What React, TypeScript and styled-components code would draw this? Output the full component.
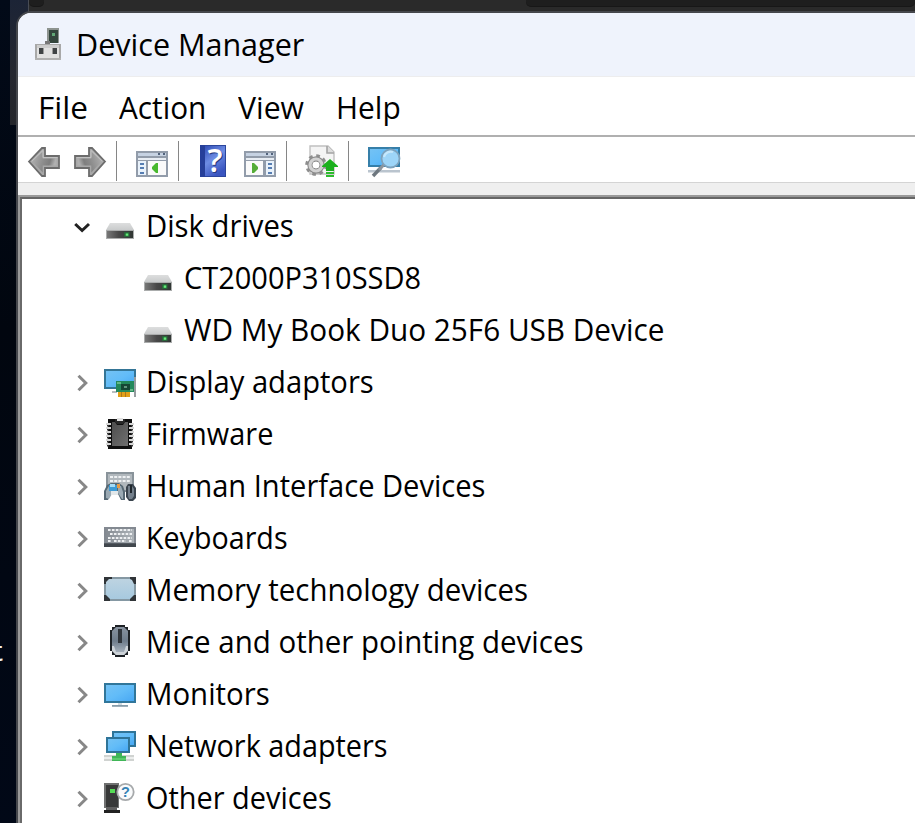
import React from 'react';
import styled, { createGlobalStyle } from 'styled-components';

const GlobalStyle = createGlobalStyle`
  html, body { margin: 0; padding: 0; overflow: hidden; background: #020818; }
  * { box-sizing: border-box; }
`;

const Desktop = styled.main`
  position: relative;
  width: 915px;
  height: 823px;
  padding: 11px 0 0 16px;
  overflow: hidden;
  background: linear-gradient(180deg, #020a18 0%, #01060f 40%, #010817 100%);
  font-family: 'Open Sans', 'Noto Sans', sans-serif;
  color: #000;
`;

/* Windows that sit behind Device Manager */
const BackPanel = styled.div`
  position: absolute;
  left: 10px;
  top: 0;
  width: 19px;
  height: 125px;
  background: linear-gradient(180deg, #1c2436, #262830 60%, #24262b);
`;

const BackWindow = styled.div`
  position: absolute;
  left: 28px;
  top: 0;
  right: 0;
  height: 30px;
  background: #2a2a2a;
  border-left: 1px solid #484c54;
`;

const BackTab = styled.div<{ $left: number; $right?: number }>`
  position: absolute;
  top: 0;
  left: ${(p) => p.$left}px;
  width: ${(p) => (p.$right ? `${p.$right - p.$left}px` : 'auto')};
  right: ${(p) => (p.$right ? 'auto' : '0')};
  height: 7px;
  background: #1e1e1e;
  border-bottom: 1px solid #171717;
  border-radius: 0 0 5px 5px;
`;

const StrayText = styled.span`
  position: absolute;
  left: -11px;
  top: 638px;
  font: 27px/32px 'Liberation Mono', monospace;
  color: #f2f2f2;
`;

const Window = styled.section`
  position: relative;
  display: flex;
  flex-direction: column;
  width: 920px;
  height: 812px;
  border: 2px solid #45474c;
  border-bottom: 0;
  border-radius: 15px 0 0 0;
  background: #fff;
  overflow: hidden;
`;

const TitleBar = styled.header`
  display: flex;
  align-items: center;
  height: 64px;
  flex: none;
  padding: 0 0 1px 16px;
  gap: 9px;
  background: #eff3fc;
  border-bottom: 1px solid #ededee;
`;

const Label = styled.span<{ $fit: number; $shift?: number }>`
  display: block;
  font-size: 31px;
  line-height: 44px;
  white-space: nowrap;
  transform-origin: 0 50%;
  transform: scaleX(${(p) => p.$fit});
  margin-left: ${(p) => p.$shift ?? 0}px;
`;

const MenuBar = styled.nav`
  display: grid;
  grid-template-columns: 82px 119px 100px 90px;
  align-items: center;
  height: 58px;
  flex: none;
  padding: 2px 0 0 19px;
`;

const ToolBar = styled.div`
  display: flex;
  align-items: center;
  height: 48px;
  flex: none;
  border-top: 2px solid #b0b0b0;
  border-bottom: 1px solid #d4d4d4;
  padding: 2px 0 0 10px;
`;

const ToolButton = styled.span<{ $gap: number }>`
  display: flex;
  width: 32px;
  padding-top: 2px;
  margin-right: ${(p) => p.$gap}px;
`;

const Separator = styled.i<{ $gap: number }>`
  width: 1px;
  height: 40px;
  background: #868686;
  margin-right: ${(p) => p.$gap}px;
`;

const Gutter = styled.div`
  height: 12px;
  flex: none;
  background: #efefef;
`;

const TreeFrame = styled.div`
  flex: 1;
  border-top: 2px solid #9a9a9a;
  border-left: 2px solid #9a9a9a;
`;

const Tree = styled.ul`
  height: 100%;
  margin: 0;
  padding: 0;
  list-style: none;
  border-top: 2px solid #666;
  border-left: 2px solid #6a6a6a;
`;

const Row = styled.li<{ $child?: boolean }>`
  display: flex;
  align-items: center;
  height: 52px;
  padding-left: ${(p) => (p.$child ? 120 : 52)}px;
`;

const Twisty = styled.span`
  display: flex;
  width: 30px;
  padding-top: 4px;
`;

const IconSlot = styled.span`
  display: flex;
  width: 32px;
  margin-right: 10px;
`;

const Svg = styled.svg`
  display: block;
  flex: none;
  width: 32px;
  height: 32px;
  overflow: visible;
`;

type IconProps = { children: React.ReactNode };
const Icon = ({ children }: IconProps) => <Svg viewBox="0 0 32 32">{children}</Svg>;

const ScreenGradient = ({ id }: { id: string }) => (
  <linearGradient id={id} x1="0" y1="0" x2="1" y2="1">
    <stop offset="0" stopColor="#74c2f4" />
    <stop offset="0.5" stopColor="#62bcf8" />
    <stop offset="1" stopColor="#48a8f4" />
  </linearGradient>
);

const DeviceManagerIcon = () => (
  <Icon>
    <path d="M13 0h12v15H13z" fill="#8d938f" />
    <path d="M15 2h9v13h-9z" fill="#34463d" />
    <path d="M18 5h3v3h-3z" fill="#61a876" />
    <path d="M11 13h5v3h-5z" fill="#777" />
    <path d="M1 16h26v16H1z" fill="#a8a8a8" />
    <path d="M3 17h22v3H3z" fill="#cdcdcd" />
    <path d="M3 20h22v10H3z" fill="#e1e1e1" />
    <path d="M5 20h4v6H5zM19 20h4v6h-4z" fill="#3f4345" />
    <path d="M9 20h1v6H9zM18 20h1v6h-1z" fill="#999" />
    <path d="M1 30h26v2H1z" fill="#b0b0b0" />
  </Icon>
);

const ArrowIcon = ({ flip }: { flip?: boolean }) => (
  <Icon>
    <defs>
      <linearGradient id={flip ? 'arrR' : 'arrL'} x1="0" x2="1" y1="0" y2="0.3">
        <stop offset="0" stopColor="#b4b4b4" />
        <stop offset="0.55" stopColor="#8c8c8c" />
        <stop offset="0.8" stopColor="#7e7e7e" />
        <stop offset="1" stopColor="#b0b0b0" />
      </linearGradient>
    </defs>
    <g transform={flip ? 'translate(32 0) scale(-1 1)' : undefined}>
      <path d="M1 15.5 L14 2 H17 V10 H31 V22 H17 V30 H14 Z" fill="#a8a8a8" stroke="#6c6c6c" strokeWidth="1.8" />
      <path d="M4.5 15.5 L14.7 5.5 V12.5 H28.5 V19.5 H14.7 V26.5 Z" fill={`url(#${flip ? 'arrR' : 'arrL'})`} />
      <path d="M3.6 15.5 L15 4.4 V11.6 H29.5" fill="none" stroke="#c4c4c4" strokeWidth="1" />
    </g>
  </Icon>
);

const PanelIcon = ({ right }: { right?: boolean }) => (
  <Icon>
    <path d="M0 5h32v26H0z" fill="#929caa" />
    <path d="M2 7h28v3H2z" fill="#c6d2e2" />
    <path d="M22 7h2v2h-2zM27 7h2v2h-2z" fill="#52637c" />
    <path d="M2 12h28v2H2z" fill="#e8edf3" />
    {right ? (
      <>
        <path d="M2 15h17v14H2z" fill="#fafafa" />
        <path d="M22 15h8v14h-8z" fill="#e9f2fb" />
        <path d="M24 17h4v2h-4zM24 21h4v2h-4zM24 26h4v2h-4z" fill="#557db2" />
        <path d="M8 17h2l4 4v2l-4 4H8z" fill="#55ad38" />
      </>
    ) : (
      <>
        <path d="M2 15h8v14H2z" fill="#e9f2fb" />
        <path d="M12 15h18v14H12z" fill="#fafafa" />
        <path d="M4 17h4v2H4zM4 21h4v2H4zM4 26h4v2H4z" fill="#557db2" />
        <path d="M22 17h-2l-4 4v2l4 4h2z" fill="#48b92f" />
      </>
    )}
  </Icon>
);

const HelpIcon = () => (
  <Icon>
    <defs>
      <linearGradient id="helpG" x1="0" y1="0" x2="0.5" y2="1">
        <stop offset="0" stopColor="#3350b8" />
        <stop offset="0.5" stopColor="#6d8ce3" />
        <stop offset="1" stopColor="#3a55c0" />
      </linearGradient>
    </defs>
    <path d="M0 -1h26v32H0z" fill="#2c469c" />
    <path d="M5 0h20v30H5z" fill="url(#helpG)" />
    <path d="M0 -1h5v32H0z" fill="#263f99" />
    <text x="16" y="27" textAnchor="middle" fontFamily="Open Sans" fontWeight="600" fontSize="33" fill="#253b80">?</text>
    <text x="15" y="26.4" textAnchor="middle" fontFamily="Open Sans" fontWeight="600" fontSize="33" fill="#fff">?</text>
  </Icon>
);

const UpdateIcon = () => (
  <Icon>
    <path d="M4 0h18l6 6v22H4z" fill="#f4f4f4" stroke="#c0c0c0" strokeWidth="1.4" />
    <path d="M21 0v7h7" fill="#ddd" stroke="#a3a3a3" strokeWidth="1.6" />
    <circle cx="10" cy="19" r="9" fill="none" stroke="#8e8e8e" strokeWidth="3.6" strokeDasharray="3.53 3.53" />
    <circle cx="10" cy="19" r="6" fill="none" stroke="#8c8c8c" strokeWidth="5.4" />
    <circle cx="10" cy="19" r="6" fill="none" stroke="#d2d2d2" strokeWidth="3.2" />
    <circle cx="10" cy="19" r="3.3" fill="#fff" />
    <path d="M24 13l8 7v1h-4v4h-8v-4h-4v-1z" fill="#1bb01d" />
    <path d="M20 26h8v2h-8zM20 29h8v2h-8z" fill="#2dbb2d" />
  </Icon>
);

const ScanIcon = () => (
  <Icon>
    <defs>
      <ScreenGradient id="scanG" />
    </defs>
    <path d="M0 1h32v20H0z" fill="#367fa9" />
    <path d="M2 3h28v16H2z" fill="url(#scanG)" />
    <path d="M0 24h32v2.5H0z" fill="#bac4ce" />
    <path d="M13 21.5 L5 30" stroke="#6e777f" strokeWidth="3.4" />
    <path d="M16 18.5 L11 24" stroke="#8c959d" strokeWidth="3" />
    <circle cx="22.5" cy="12.5" r="9" fill="#9dd5f8" stroke="#7ea3bd" strokeWidth="1.8" />
    <path d="M16 11a7 7 0 0 1 9-5" fill="none" stroke="#c6e8fc" strokeWidth="2.2" />
  </Icon>
);

const DiskIcon = () => (
  <Icon>
    <defs>
      <linearGradient id="diskTop" x1="0" y1="0" x2="0" y2="1">
        <stop offset="0" stopColor="#dddede" />
        <stop offset="1" stopColor="#c9cbcc" />
      </linearGradient>
      <linearGradient id="diskFront" x1="0" x2="1">
        <stop offset="0" stopColor="#777" />
        <stop offset="0.45" stopColor="#484848" />
        <stop offset="1" stopColor="#303633" />
      </linearGradient>
    </defs>
    <path d="M6 14h20l4 7H2z" fill="url(#diskTop)" />
    <path d="M2 21h28v9H2z" fill="#aaacac" />
    <path d="M3 22h26v7H3z" fill="url(#diskFront)" />
    <path d="M20 23h5.5v5H20z" fill="#28673a" />
    <path d="M21.7 24.4h2.6v2.4h-2.6z" fill="#63ef78" />
  </Icon>
);

const DisplayIcon = () => (
  <Icon>
    <defs>
      <ScreenGradient id="dispG" />
    </defs>
    <path d="M0 4h32v20H0z" fill="#347596" />
    <path d="M2 6h28v16H2z" fill="url(#dispG)" />
    <path d="M8 26h5v2H8z" fill="#b9bdc0" />
    <path d="M30 12h2v20h-2z" fill="#979da0" />
    <path d="M12 16h18v11H12z" fill="#23885b" />
    <path d="M13 17h4v2h-4zM26 24h3v2h-3z" fill="#64b987" />
    <path d="M17 19h9v6h-9z" fill="#164634" />
    <path d="M20 21h3v2h-3z" fill="#62947d" />
    <path d="M14 27h12v5H14z" fill="#e2a019" />
    <path d="M17 27h1v5h-1zM21 27h1v5h-1z" fill="#ac771e" />
  </Icon>
);

const FirmwareIcon = () => (
  <Icon>
    <defs>
      <linearGradient id="fwG" x1="0" y1="0" x2="1" y2="1">
        <stop offset="0" stopColor="#4d4d4d" />
        <stop offset="1" stopColor="#707070" />
      </linearGradient>
    </defs>
    <path d="M4 2h8v2h8V2h8v30H4z" fill="#101010" />
    <path d="M8 5h3l2 3h6l2-3h3v24H8z" fill="url(#fwG)" />
    <path d="M11 2h2v2h6V2h2v3l-2 2h-6l-2-2z" fill="#272727" />
    <path d="M13 1h6v3h-6z" fill="#e2e2e2" />
    {[4, 8, 12, 16, 20, 24].map((y) => (
      <g key={y}>
        <path d={`M2 ${y + 2}h5v2H2zM25 ${y + 2}h5v2h-5z`} fill="#d7d7d7" />
        <path d={`M3 ${y + 4}h2v1.6H3zM27 ${y + 4}h2v1.6h-2z`} fill="#353535" />
      </g>
    ))}
  </Icon>
);

const HidIcon = () => (
  <Icon>
    <path d="M2 3h28v20H2z" fill="#89939a" />
    <path d="M4 5h24v16H4z" fill="#b1b8bd" />
    <path d="M6 8h20M6 12h20" stroke="#eef1f3" strokeWidth="2" strokeDasharray="3 1.2" />
    <path d="M0 31V22l3-6 4-2h8l4 3 2 6v8h-4l-3-6H7l-3 6H0z" fill="#566874" />
    <path d="M2 29v-7l3-5h3v8l-3 5zM14 17h3l2 6v7h-1l-4-6z" fill="#9baab4" />
    <path d="M5 16h8v6H5z" fill="#3d9bd5" />
    <path d="M6 15h5v3H6z" fill="#a6dbf5" />
    <path d="M13 15h3v4h-3z" fill="#e79a45" />
    <path d="M7 22h7v4H7z" fill="#e2e7e9" />
    <path d="M22 18l2-3h5l3 4v10l-3 3h-4l-3-4z" fill="#3a444e" />
    <path d="M24 17h4l2 3v7l-2 3h-3l-1-3z" fill="#737f8b" />
    <path d="M26 16h2v8h-2z" fill="#20272d" />
  </Icon>
);

const KeyboardIcon = () => (
  <Icon>
    <defs>
      <linearGradient id="kbG" x1="0" x2="1">
        <stop offset="0" stopColor="#858b92" />
        <stop offset="1" stopColor="#adb3b8" />
      </linearGradient>
    </defs>
    <path d="M0 6h32v20H0z" fill="#838991" />
    <path d="M2 8h28v14H2z" fill="url(#kbG)" />
    <path d="M4 9h24M6 13h22M4 17h24M4 20h3M10 20h12M25 20h3" stroke="#eef0f2" strokeWidth="2" strokeDasharray="2.6 1.3" />
    <path d="M0 22.3h32V26H0z" fill="#41474d" />
  </Icon>
);

const MemoryIcon = () => (
  <Icon>
    <defs>
      <linearGradient id="memG" x1="0" y1="0" x2="0" y2="1">
        <stop offset="0" stopColor="#bdd3e1" />
        <stop offset="1" stopColor="#a7c9df" />
      </linearGradient>
    </defs>
    <path d="M0 4h32v24H0z" fill="#8598a3" />
    <path d="M2 6h28v20H2z" fill="url(#memG)" />
    <path d="M0 4h8v2H5L2 9v2H0zM32 4h-6v2l2 1 2 4h2zM0 28h6v-2l-4-4H0zM32 28h-6v-2l4-4h2z" fill="#303438" />
  </Icon>
);

const MouseIcon = () => (
  <Icon>
    <defs>
      <linearGradient id="msG" x1="0" y1="0" x2="0" y2="1">
        <stop offset="0" stopColor="#87929f" />
        <stop offset="0.5" stopColor="#6e7c8b" />
        <stop offset="1" stopColor="#b4bec8" />
      </linearGradient>
    </defs>
    <path d="M11 0h10v2h3v3h2v21h-2v4h-3v2H11v-2H8v-4H6V5h2V2h3z" fill="#1d2125" />
    <path d="M12 2h8l4 4v19l-4 5h-8l-4-5V6z" fill="url(#msG)" />
    <path d="M8 21h2l2 6h8l2-6h2v5l-4 4h-8l-4-4z" fill="#cdd3d8" />
    <path d="M14 4h4v14h-4z" fill="#2f353b" />
  </Icon>
);

const MonitorIcon = () => (
  <Icon>
    <defs>
      <ScreenGradient id="monG" />
    </defs>
    <path d="M0 6h32v20H0z" fill="#31769a" />
    <path d="M2 8h28v16H2z" fill="url(#monG)" />
    <path d="M14 26h4v2h-4z" fill="#d2dce2" />
    <path d="M8 28h16v1.8H8z" fill="#879dab" />
  </Icon>
);

const NetworkIcon = () => (
  <Icon>
    <defs>
      <ScreenGradient id="netG" />
    </defs>
    <path d="M8 2h24v16H8z" fill="#2f7498" />
    <path d="M10 4h20v12H10z" fill="url(#netG)" />
    <path d="M2 8h24v16H2z" fill="#2f7498" />
    <path d="M4 10h20v12H4z" fill="url(#netG)" />
    <path d="M0 26h30v6H0z" fill="#d0d3d1" />
    <path d="M0 28h30v2H0z" fill="#eceeed" />
    <path d="M12 24h6v3h4v5H8v-5h4z" fill="#40b657" />
    <path d="M8 29h14v2H8z" fill="#5bcb6c" />
  </Icon>
);

const OtherIcon = () => (
  <Icon>
    <path d="M0 2h15v25H0z" fill="#707171" />
    <path d="M2 4h12v22H2z" fill="#383939" />
    <path d="M6 8h5v4H6z" fill="#55dc55" />
    <path d="M2 26h11v3H2z" fill="#606060" />
    <path d="M0 29h16v3H0z" fill="#222" />
    <circle cx="21.5" cy="11" r="8.2" fill="#fafbfc" stroke="#a6a9ab" strokeWidth="1.8" />
    <text x="21.4" y="16.3" textAnchor="middle" fontFamily="Liberation Sans" fontWeight="700" fontSize="14.5" fill="#3582b5">?</text>
  </Icon>
);

const ChevronSvg = styled.svg`
  display: block;
  width: 20px;
  height: 20px;
  fill: none;
  stroke-width: 3;
`;

const Chevron = ({ open }: { open?: boolean }) => (
  <ChevronSvg viewBox="0 0 20 20" stroke={open ? '#222' : '#888'}>
    <path d={open ? 'M1.2 7 L8.1 13.5 L15 7' : 'M4.5 2.8 L11.8 10 L4.5 17.2'} />
  </ChevronSvg>
);

type Node = { text: string; fit: number; icon: () => React.JSX.Element; open?: boolean; child?: boolean; shift?: number };

const nodes: Node[] = [
  { text: 'Disk drives', fit: 0.944, icon: DiskIcon, open: true },
  { text: 'CT2000P310SSD8', fit: 0.935, icon: DiskIcon, child: true },
  { text: 'WD My Book Duo 25F6 USB Device', fit: 0.959, icon: DiskIcon, child: true },
  { text: 'Display adaptors', fit: 0.94, icon: DisplayIcon },
  { text: 'Firmware', fit: 0.933, icon: FirmwareIcon },
  { text: 'Human Interface Devices', fit: 0.938, icon: HidIcon },
  { text: 'Keyboards', fit: 0.924, icon: KeyboardIcon },
  { text: 'Memory technology devices', fit: 0.949, icon: MemoryIcon },
  { text: 'Mice and other pointing devices', fit: 0.951, icon: MouseIcon },
  { text: 'Monitors', fit: 0.948, icon: MonitorIcon },
  { text: 'Network adapters', fit: 0.93, icon: NetworkIcon },
  { text: 'Other devices', fit: 0.933, icon: OtherIcon },
];

const menus = [
  { text: 'File', fit: 1.02, shift: 1 },
  { text: 'Action', fit: 0.96, shift: 0 },
  { text: 'View', fit: 0.975, shift: 0 },
  { text: 'Help', fit: 0.965, shift: -2 },
];

export default function App() {
  return (
    <>
      <GlobalStyle />
      <Desktop>
        <BackPanel />
        <BackWindow>
          <BackTab $left={0} $right={15} />
          <BackTab $left={497} />
        </BackWindow>
        <StrayText>t</StrayText>
        <Window>
          <TitleBar>
            <DeviceManagerIcon />
            <Label $fit={0.985} $shift={1}>Device Manager</Label>
          </TitleBar>
          <MenuBar>
            {menus.map((m) => (
              <Label key={m.text} $fit={m.fit} $shift={m.shift}>{m.text}</Label>
            ))}
          </MenuBar>
          <ToolBar>
            <ToolButton $gap={14}><ArrowIcon /></ToolButton>
            <ToolButton $gap={10}><ArrowIcon flip /></ToolButton>
            <Separator $gap={19} />
            <ToolButton $gap={10}><PanelIcon /></ToolButton>
            <Separator $gap={21} />
            <ToolButton $gap={12}><HelpIcon /></ToolButton>
            <ToolButton $gap={10}><PanelIcon right /></ToolButton>
            <Separator $gap={19} />
            <ToolButton $gap={10}><UpdateIcon /></ToolButton>
            <Separator $gap={19} />
            <ToolButton $gap={0}><ScanIcon /></ToolButton>
          </ToolBar>
          <Gutter />
          <TreeFrame>
            <Tree>
              {nodes.map(({ text, fit, icon: NodeIcon, open, child, shift }) => (
                <Row key={text} $child={child}>
                  {!child && <Twisty><Chevron open={open} /></Twisty>}
                  <IconSlot><NodeIcon /></IconSlot>
                  <Label $fit={fit} $shift={shift}>{text}</Label>
                </Row>
              ))}
            </Tree>
          </TreeFrame>
        </Window>
      </Desktop>
    </>
  );
}
